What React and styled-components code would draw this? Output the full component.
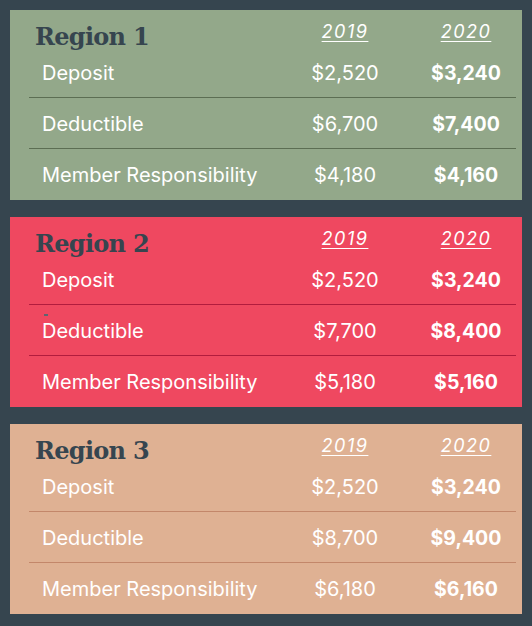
import React from "react";
import styled, { createGlobalStyle } from "styled-components";

const Global = createGlobalStyle`
  html, body { margin: 0; padding: 0; background: #36454f; }
  body { font-family: Inter, "Open Sans", "Liberation Sans", sans-serif; }
`;

const Page = styled.div`
  display: flex;
  flex-direction: column;
  gap: 17px;
  padding: 10px 10px 11px 10px;
  background: #36454f;
`;

const Card = styled.section`
  background: ${(p) => p.$bg};
  height: 190px;
  box-sizing: border-box;
  padding: 0 6px 0 19px;
  display: flex;
  flex-direction: column;
`;

const Grid = styled.div`
  display: grid;
  grid-template-columns: 256px 120px 111px;
  align-items: center;
`;

const Header = styled(Grid)`
  height: 37px;
  align-items: start;
`;

const Title = styled.h2`
  margin: 0;
  padding: 12px 0 0 6px;
  font-family: "DejaVu Serif", "Liberation Serif", serif;
  font-weight: 700;
  font-size: 24px;
  line-height: 30px;
  letter-spacing: -0.7px;
  color: #36454f;
`;

const Year = styled.div`
  padding-top: 12px;
  padding-left: ${(p) => (p.$last ? "11px" : "0")};
  text-align: center;
  font-style: italic;
  font-size: 18px;
  letter-spacing: 1.5px;
  line-height: 20px;
  color: #ffffff;
  text-decoration: underline;
  text-decoration-thickness: 1px;
  text-underline-offset: 3px;
`;

const Row = styled(Grid)`
  height: 48px;
  padding-top: 2px;
  border-bottom: ${(p) => (p.$last ? "none" : `1px solid ${p.$line}`)};
`;

const Label = styled.div`
  position: relative;
  padding-left: 13px;
  font-size: 20px;
  color: #ffffff;
  line-height: 24px;
`;

const Value = styled.div`
  text-align: center;
  padding-left: ${(p) => (p.$last ? "11px" : "0")};
  font-size: ${(p) => (p.$bold ? "19.5px" : "20px")};
  line-height: 24px;
  font-weight: ${(p) => (p.$bold ? 700 : 400)};
  color: #ffffff;
`;

const Dash = styled.span`
  position: absolute;
  left: 15px;
  top: -5px;
  width: 4px;
  height: 2px;
  background: #5d6470;
`;

const regions = [
  {
    name: "Region 1",
    bg: "#93a88a",
    line: "#5c6e53",
    rows: [
      ["Deposit", "$2,520", "$3,240"],
      ["Deductible", "$6,700", "$7,400"],
      ["Member Responsibility", "$4,180", "$4,160"],
    ],
  },
  {
    name: "Region 2",
    bg: "#ef4860",
    line: "#b21c3e",
    dash: true,
    rows: [
      ["Deposit", "$2,520", "$3,240"],
      ["Deductible", "$7,700", "$8,400"],
      ["Member Responsibility", "$5,180", "$5,160"],
    ],
  },
  {
    name: "Region 3",
    bg: "#dfb193",
    line: "#c3876a",
    rows: [
      ["Deposit", "$2,520", "$3,240"],
      ["Deductible", "$8,700", "$9,400"],
      ["Member Responsibility", "$6,180", "$6,160"],
    ],
  },
];

export default function App() {
  return (
    <>
      <Global />
      <Page>
        {regions.map((r) => (
          <Card key={r.name} $bg={r.bg}>
            <Header>
              <Title>{r.name}</Title>
              <Year>2019</Year>
              <Year $last>2020</Year>
            </Header>
            {r.rows.map((row, i) => (
              <Row key={row[0]} $line={r.line} $last={i === r.rows.length - 1}>
                <Label>
                  {r.dash && i === 1 && <Dash />}
                  {row[0]}
                </Label>
                <Value>{row[1]}</Value>
                <Value $bold $last>
                  {row[2]}
                </Value>
              </Row>
            ))}
          </Card>
        ))}
      </Page>
    </>
  );
}
